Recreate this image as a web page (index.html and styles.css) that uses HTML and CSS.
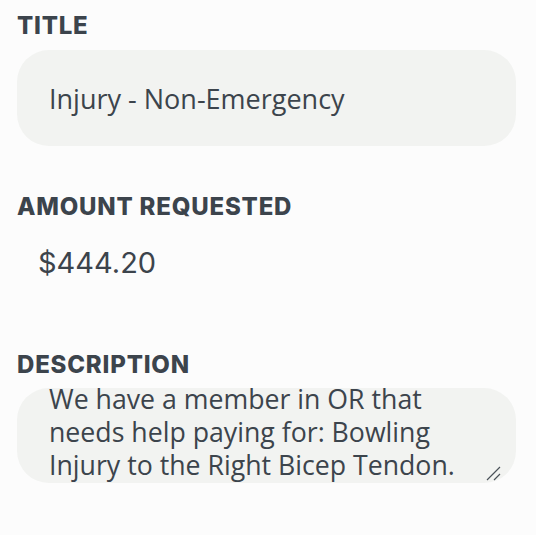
FILE: index.html
```html
<!DOCTYPE html>
<html>

<head>
    <title>Request</title>
    <link rel="stylesheet" href="styles.css">
</head>

<body>
    <form class="request-form">
        <div class="field">
            <label class="field-label" for="title">Title</label>
            <input class="field-input" id="title" type="text" value="Injury - Non-Emergency">
        </div>

        <div class="field">
            <label class="field-label">Amount Requested</label>
            <div class="field-amount">$444.20</div>
        </div>

        <div class="field">
            <label class="field-label">Description</label>
            <div class="field-textarea">
                <div class="textarea-text">We have a member in OR that needs help paying for: Bowling Injury to the Right Bicep Tendon.</div>
                <svg class="resize-grip" width="16" height="16" viewBox="0 0 16 16">
                    <path d="M2 15 L15 2 M9 15 L15 9" stroke="#4a5159" stroke-width="1.2" fill="none" />
                </svg>
            </div>
        </div>
    </form>
</body>

</html>
```

FILE: styles.css
```css
body {
    font-family: "Open Sans", sans-serif;
    margin: 0;
    padding: 0;
    background: #fcfcfc;
    color: #3c444c;
}

.request-form {
    padding: 12px 20px 0 17px;
    display: flex;
    flex-direction: column;
}

.field {
    display: flex;
    flex-direction: column;
}

.field-label {
    font-family: Inter, sans-serif;
    font-weight: 800;
    font-size: 24px;
    letter-spacing: 0.8px;
    text-transform: uppercase;
    color: #3c444c;
    line-height: 28px;
}

.field-input {
    margin: 10px 0 47px 0;
    height: 96px;
    border: none;
    border-radius: 32px;
    background: #f2f3f1;
    padding: 0 32px;
    font-family: "Open Sans", sans-serif;
    font-size: 27px;
    color: #3c444c;
    outline: none;
}

.field-amount {
    font-family: Inter, sans-serif;
    font-size: 29px;
    line-height: 35px;
    color: #3c444c;
    padding: 24px 21px 0;
    margin-bottom: 71px;
}

.field-textarea {
    position: relative;
    margin-top: 9px;
    height: 95px;
    border-radius: 32px;
    background: #f2f3f1;
    padding: 0 32px;
    overflow: hidden;
}

.textarea-text {
    margin-top: -6px;
    font-size: 26.7px;
    line-height: 33px;
    color: #3c444c;
}

.resize-grip {
    position: absolute;
    right: 15px;
    bottom: 2px;
}
```
